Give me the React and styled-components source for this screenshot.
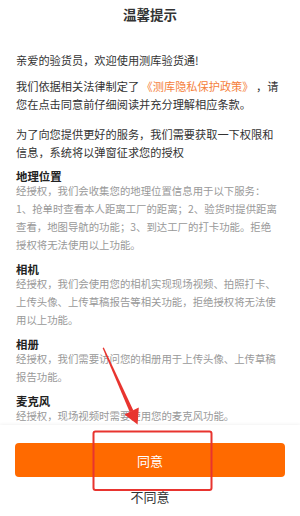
import React from "react"
import styled, { createGlobalStyle } from "styled-components"

const GlobalStyle = createGlobalStyle`
    html, body {
        margin: 0;
        padding: 0;
        background: #fff;
    }
    body {
        font-family: "Noto Sans CJK SC", "Noto Sans", sans-serif;
    }
`

const Page = styled.div`
    position: relative;
    width: 300px;
    height: 516px;
    display: flex;
    flex-direction: column;
    background: #fff;
    overflow: hidden;
`

const Header = styled.div`
    height: 28px;
    line-height: 28px;
    text-align: center;
    font-size: 13.5px;
    font-weight: 700;
    color: #333;
    flex-shrink: 0;
`

const Body = styled.div`
    flex: 1;
    overflow: hidden;
    padding: 23px 16px 0;
`

const Para = styled.p`
    margin: 0 0 ${p => p.$gap || 8}px;
    font-size: 11.2px;
    line-height: 18px;
    color: #333;
    white-space: pre;
`

const Link = styled.span`
    color: #f5813c;
`

const Section = styled.div`
    margin-top: 9px;
`

const SectionTitle = styled.h3`
    margin: 0;
    font-size: 11.4px;
    line-height: 12px;
    font-weight: 700;
    color: #222;
`

const SectionText = styled.p`
    margin: 0;
    font-size: 10.4px;
    line-height: 18px;
    color: #999;
    white-space: pre;
`

const Footer = styled.div`
    flex-shrink: 0;
    height: 91px;
    padding: 18px 15px 0;
    box-sizing: border-box;
    background: #fff;
    box-shadow: 0 -1px 3px rgba(0, 0, 0, 0.05);
    display: flex;
    flex-direction: column;
    align-items: center;
`

const AgreeButton = styled.button`
    width: 100%;
    height: 34px;
    border: none;
    border-radius: 4px;
    background: #ff6a00;
    color: #fff;
    font-family: inherit;
    font-size: 13px;
`

const RejectButton = styled.button`
    margin-top: 11px;
    border: none;
    background: none;
    padding: 0;
    font-family: inherit;
    font-size: 13px;
    line-height: 18px;
    color: #333;
`

const Overlay = styled.svg`
    position: absolute;
    left: 0;
    top: 0;
    pointer-events: none;
`

const sections = [
    {
        title: "地理位置",
        lines: [
            "经授权，我们会收集您的地理位置信息用于以下服务：",
            "1、抢单时查看本人距离工厂的距离；2、验货时提供距离",
            "查看，地图导航的功能；3、到达工厂的打卡功能。拒绝",
            "授权将无法使用以上功能。",
        ],
    },
    {
        title: "相机",
        lines: [
            "经授权，我们会使用您的相机实现现场视频、拍照打卡、",
            "上传头像、上传草稿报告等相关功能，拒绝授权将无法使",
            "用以上功能。",
        ],
    },
    {
        title: "相册",
        lines: [
            "经授权，我们需要访问您的相册用于上传头像、上传草稿",
            "报告功能。",
        ],
    },
    {
        title: "麦克风",
        lines: ["经授权，现场视频时需要使用您的麦克风功能。"],
    },
]

const Annotation = () => (
    <Overlay width="300" height="516" viewBox="0 0 300 516">
        <polygon points="102.6,348 103.8,347.6 133.4,410.6 129.8,412.2" fill="#e8342f" />
        <polygon points="138.8,407.6 124.4,414.4 137.6,424.5" fill="#e8342f" />
        <rect x="93.5" y="431.5" width="118" height="58.5" rx="2" fill="none" stroke="#e8342f" strokeWidth="2" />
    </Overlay>
)

const App = () => {
    return (
        <Page>
            <GlobalStyle />
            <Header>温馨提示</Header>
            <Body>
                <Para>亲爱的验货员，欢迎使用测库验货通!</Para>
                <Para $gap={12}>
                    {"我们依据相关法律制定了 "}<Link>《测库隐私保护政策》</Link>{" ，请\n您在点击同意前仔细阅读并充分理解相应条款。"}
                </Para>
                <Para $gap={0}>
                    {"为了向您提供更好的服务，我们需要获取一下权限和\n信息，系统将以弹窗征求您的授权"}
                </Para>
                {sections.map(s => (
                    <Section key={s.title}>
                        <SectionTitle>{s.title}</SectionTitle>
                        <SectionText>{s.lines.join("\n")}</SectionText>
                    </Section>
                ))}
            </Body>
            <Footer>
                <AgreeButton>同意</AgreeButton>
                <RejectButton>不同意</RejectButton>
            </Footer>
            <Annotation />
        </Page>
    )
}

export default App
